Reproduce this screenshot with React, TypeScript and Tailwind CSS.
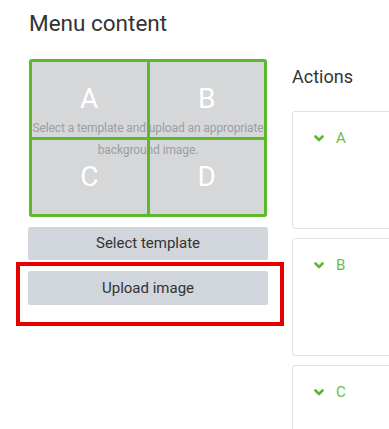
import React from 'react';

const cells = ['A', 'B', 'C', 'D'];
const actions = ['A', 'B', 'C'];

const Chevron: React.FC = () => (
  <svg width="10" height="7" viewBox="0 0 10 7" className="shrink-0">
    <path d="M1.5 1.5 L5 5 L8.5 1.5" fill="none" stroke="#5cb82c" strokeWidth="2.6" strokeLinecap="round" strokeLinejoin="round" />
  </svg>
);

const App: React.FC = () => {
  return (
    <div className="relative w-[389px] h-[429px] overflow-hidden bg-white font-['Roboto',sans-serif]">
      <div className="flex gap-[24px] pl-[28px]">
        {/* Left column */}
        <div className="w-[240px] shrink-0">
          <h2 className="pl-[1px] pt-[10px] text-[22.5px] leading-[26px] text-[#333]">Menu content</h2>

          <div className="relative mt-[23px] ml-[1px] w-[238px] h-[158px] rounded-[3px] bg-[#d6d7d9]">
            <p className="flex h-full items-center justify-center pt-[1px] text-center text-[12px] leading-[22px] tracking-[-0.1px] text-[#9a9ea5]">
              Select a template and upload an appropriate
              <br />
              background image.
            </p>
            {/* template zones */}
            <div className="absolute inset-0 grid grid-cols-2 grid-rows-2 gap-[3px] rounded-[3px] border-[3px] border-[#5cb82c] bg-transparent">
              {cells.map((c) => (
                <div key={c} className="flex items-center justify-center text-[28px] text-white">
                  {c}
                </div>
              ))}
            </div>
            <div className="absolute top-0 bottom-0 left-[118px] w-[3px] bg-[#5cb82c]" />
            <div className="absolute left-0 right-0 top-[78px] h-[3px] bg-[#5cb82c]" />
          </div>

          <button className="mt-[10px] flex h-[33px] w-full items-center justify-center rounded-[2px] bg-[#d1d5dc] text-[15px] text-[#333]">
            Select template
          </button>
          <button className="mt-[11px] flex h-[34px] w-full items-center justify-center rounded-[2px] bg-[#d1d5dc] text-[15px] text-[#333]">
            Upload image
          </button>
        </div>

        {/* Right column */}
        <div className="w-[200px] shrink-0">
          <h3 className="pt-[66px] text-[18px] leading-[22px] text-[#333]">Actions</h3>
          <div className="mt-[23px] flex flex-col gap-[9px]">
            {actions.map((a) => (
              <div key={a} className="h-[118px] rounded-[3px] border border-[#e2e2e2] pl-[21px] pt-[15px]">
                <div className="flex items-center gap-[12px]">
                  <Chevron />
                  <span className="text-[15px] text-[#6abf45]">{a}</span>
                </div>
              </div>
            ))}
          </div>
        </div>
      </div>

      {/* annotation highlight */}
      <div className="absolute left-[16px] top-[262px] w-[268px] h-[64px] border-[4px] border-[#e60000]" />
    </div>
  );
};

export default App;
